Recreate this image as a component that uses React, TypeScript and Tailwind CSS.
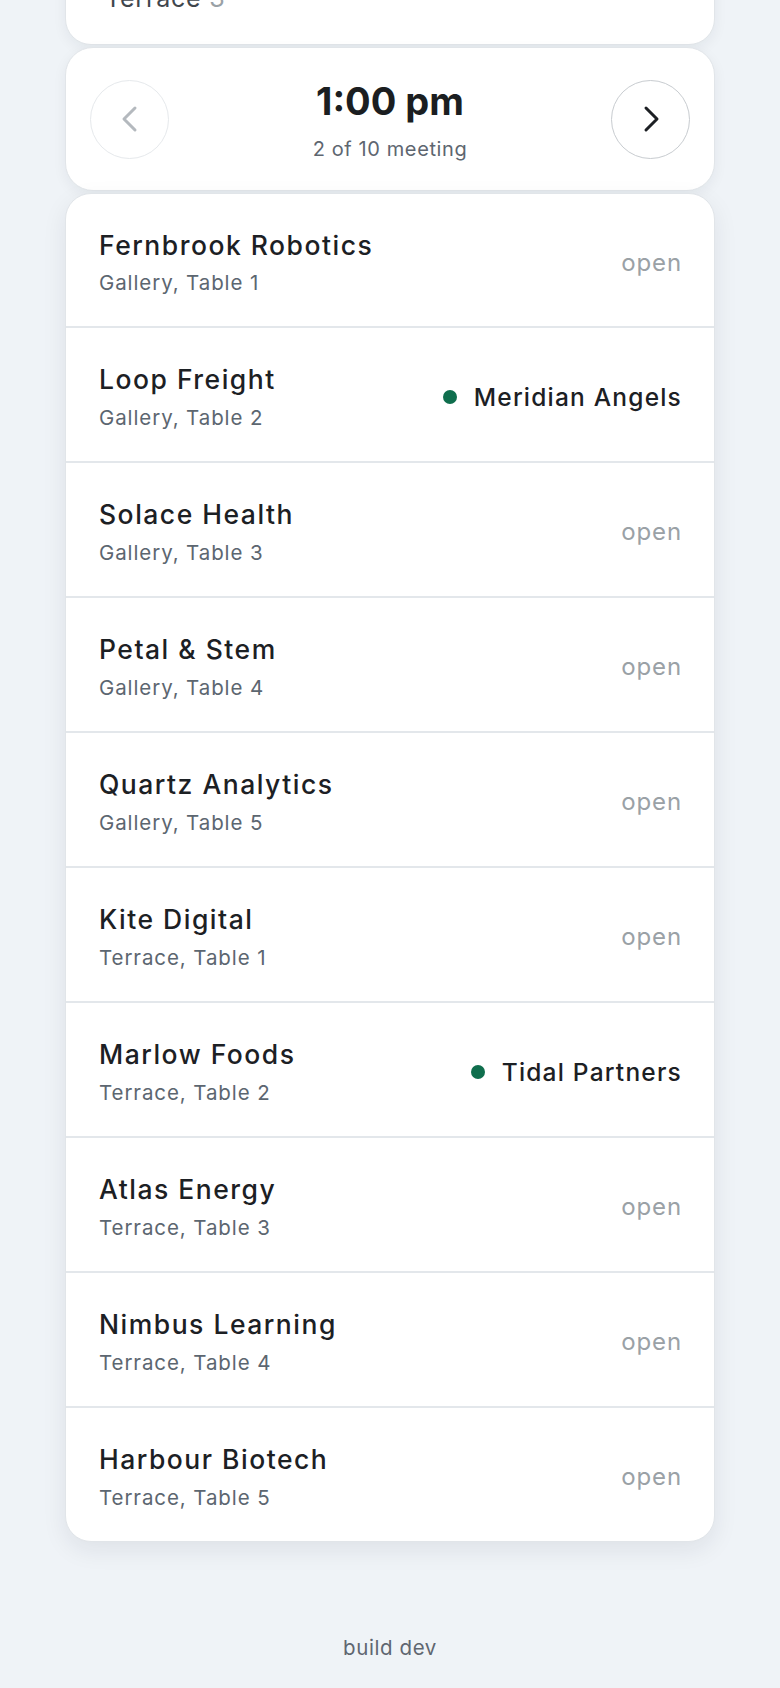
import React from "react";

type Row = { name: string; loc: string; investor?: string };

const rows: Row[] = [
  { name: "Fernbrook Robotics", loc: "Gallery, Table 1" },
  { name: "Loop Freight", loc: "Gallery, Table 2", investor: "Meridian Angels" },
  { name: "Solace Health", loc: "Gallery, Table 3" },
  { name: "Petal & Stem", loc: "Gallery, Table 4" },
  { name: "Quartz Analytics", loc: "Gallery, Table 5" },
  { name: "Kite Digital", loc: "Terrace, Table 1" },
  { name: "Marlow Foods", loc: "Terrace, Table 2", investor: "Tidal Partners" },
  { name: "Atlas Energy", loc: "Terrace, Table 3" },
  { name: "Nimbus Learning", loc: "Terrace, Table 4" },
  { name: "Harbour Biotech", loc: "Terrace, Table 5" },
];

export default function App() {
  return (
    <div
      className="min-h-[1688px] w-full bg-[#eff3f7] px-[65px] overflow-hidden"
      style={{ fontFamily: "Inter, 'Noto Sans', sans-serif" }}
    >
      {/* previous card, scrolled mostly out of view */}
      <div className="-mt-[61px] h-[106px] rounded-[26px] border border-[#e1e5e9] bg-white shadow-[0_4px_14px_rgba(20,30,50,0.06)] flex items-end px-[39px] pb-[33px]">
        <span className="text-[25px] leading-none tracking-[0.8px] text-[#3f464d]">
          Terrace <span className="text-[#9aa1a6]">3</span>
        </span>
      </div>

      {/* time navigator */}
      <div className="mt-[2px] h-[144px] rounded-[28px] border border-[#e1e5e9] bg-white shadow-[0_4px_14px_rgba(20,30,50,0.06)] flex items-center justify-between px-[24px]">
        <button className="w-[79px] h-[79px] rounded-full border-[1.5px] border-[#e6e9ec] flex items-center justify-center">
          <svg width="28" height="28" viewBox="0 0 28 28" fill="none" stroke="#b4b9be" strokeWidth="3" strokeLinecap="round" strokeLinejoin="round">
            <path d="M19 3 L8 14 L19 25" />
          </svg>
        </button>
        <div className="flex flex-col items-center pt-[3px]">
          <div className="text-[38px] font-bold leading-none tracking-[0px] text-[#1b1e21]">1:00 pm</div>
          <div className="mt-[19px] text-[20px] leading-none tracking-[0.6px] text-[#5e6670]">2 of 10 meeting</div>
        </div>
        <button className="w-[79px] h-[79px] rounded-full border-[1.5px] border-[#c8ccd0] flex items-center justify-center">
          <svg width="28" height="28" viewBox="0 0 28 28" fill="none" stroke="#1d2024" strokeWidth="3" strokeLinecap="round" strokeLinejoin="round">
            <path d="M9 3 L20 14 L9 25" />
          </svg>
        </button>
      </div>

      {/* list */}
      <div className="mt-[2px] rounded-[26px] border border-[#e1e5e9] bg-white shadow-[0_8px_24px_rgba(20,30,50,0.08)] overflow-hidden">
        {rows.map((r, i) => (
          <div
            key={r.name}
            className={`${i === 0 ? "h-[132px]" : "h-[135px] border-t-2 border-[#e3e7eb]"} flex items-center justify-between pl-[33px] pr-[32px] pt-[5px]`}
          >
            <div className="flex flex-col">
              <div className="text-[26.5px] font-medium leading-none tracking-[1.5px] text-[#1c2024]">{r.name}</div>
              <div className="mt-[15px] text-[20.5px] leading-none tracking-[0.9px] text-[#5c6670]">{r.loc}</div>
            </div>
            {r.investor ? (
              <div className="flex items-center gap-[17px]">
                <span className="w-[14px] h-[14px] rounded-full bg-[#0f6e4d]" />
                <span className="text-[24.5px] font-medium leading-none tracking-[1.2px] text-[#1c2024]">{r.investor}</span>
              </div>
            ) : (
              <span className="text-[24px] leading-none tracking-[0.9px] text-[#9aa1a6]">open</span>
            )}
          </div>
        ))}
      </div>

      <div className="mt-[96px] text-center text-[20.5px] leading-none tracking-[0.6px] text-[#5f6670]">build dev</div>
    </div>
  );
}
